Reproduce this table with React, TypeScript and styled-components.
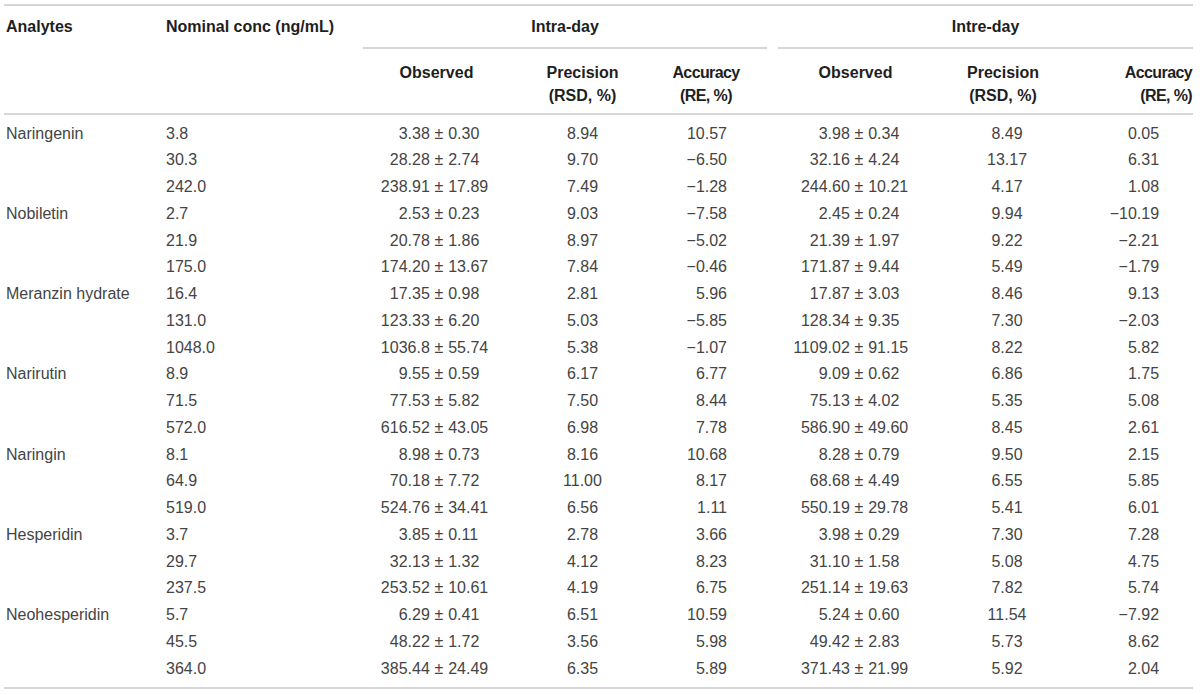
import React from 'react';
import styled, { createGlobalStyle } from 'styled-components';

const GlobalStyle = createGlobalStyle`
  html, body {
    margin: 0;
    padding: 0;
    background: #ffffff;
  }
  body {
    font-family: "Liberation Sans", Arial, sans-serif;
  }
`;

const Page = styled.div`
  width: 1200px;
  height: 695px;
  padding: 4px 0 0 4px;
  box-sizing: border-box;
  overflow: hidden;
`;

const Table = styled.table`
  width: 1189px;
  table-layout: fixed;
  border-collapse: collapse;
  border-top: 2px solid #d6d6d6;
  font-size: 16px;
`;

const HeadCell = styled.th<{ $align?: string; $padLeft?: number }>`
  font-weight: 700;
  color: #1e1e1e;
  line-height: 20px;
  vertical-align: top;
  text-align: ${p => p.$align || 'center'};
  padding: 11px 0 0 ${p => p.$padLeft || 0}px;
`;

const GroupLabel = styled.div<{ $gap: number }>`
  margin-right: ${p => p.$gap}px;
  padding: 0 0 10px;
  border-bottom: 2px solid #d6d6d6;
`;

const SubHeadRow = styled.tr`
  border-bottom: 2px solid #d6d6d6;
`;

const SubHead = styled.th<{ $align?: string; $padLeft?: number; $padRight?: number; $tight?: boolean }>`
  font-weight: 700;
  color: #1e1e1e;
  line-height: 23px;
  text-align: ${p => p.$align || 'center'};
  vertical-align: top;
  letter-spacing: ${p => (p.$tight ? '-0.6px' : 'normal')};
  padding: 11.5px ${p => p.$padRight || 0}px 6.5px ${p => p.$padLeft || 0}px;
`;

const BodyRow = styled.tr`
  &:first-child td {
    padding-top: 5.6px;
  }
  &:last-child td {
    padding-bottom: 5px;
  }
  &:last-child {
    border-bottom: 2px solid #d6d6d6;
  }
`;

const Cell = styled.td<{ $align?: string; $padLeft?: number; $padRight?: number }>`
  color: #444444;
  line-height: 26.75px;
  height: 26.75px;
  white-space: nowrap;
  text-align: ${p => p.$align || 'left'};
  padding: 0 ${p => p.$padRight || 0}px 0 ${p => p.$padLeft || 0}px;
`;

const Observed = styled.div<{ $pm: number }>`
  display: grid;
  grid-template-columns: ${p => p.$pm - 4.7}px 9.4px 1fr;
`;

const Mean = styled.span`
  text-align: right;
  padding-right: 4.5px;
`;

const PlusMinus = styled.span`
  text-align: center;
`;

const Spread = styled.span`
  padding-left: 4.5px;
`;

type Row = {
  analyte?: string;
  nominal: string;
  intra: [string, string, string, string];
  inter: [string, string, string, string];
};

const rows: Row[] = [
  { analyte: 'Naringenin', nominal: '3.8', intra: ['3.38', '0.30', '8.94', '10.57'], inter: ['3.98', '0.34', '8.49', '0.05'] },
  { nominal: '30.3', intra: ['28.28', '2.74', '9.70', '−6.50'], inter: ['32.16', '4.24', '13.17', '6.31'] },
  { nominal: '242.0', intra: ['238.91', '17.89', '7.49', '−1.28'], inter: ['244.60', '10.21', '4.17', '1.08'] },
  { analyte: 'Nobiletin', nominal: '2.7', intra: ['2.53', '0.23', '9.03', '−7.58'], inter: ['2.45', '0.24', '9.94', '−10.19'] },
  { nominal: '21.9', intra: ['20.78', '1.86', '8.97', '−5.02'], inter: ['21.39', '1.97', '9.22', '−2.21'] },
  { nominal: '175.0', intra: ['174.20', '13.67', '7.84', '−0.46'], inter: ['171.87', '9.44', '5.49', '−1.79'] },
  { analyte: 'Meranzin hydrate', nominal: '16.4', intra: ['17.35', '0.98', '2.81', '5.96'], inter: ['17.87', '3.03', '8.46', '9.13'] },
  { nominal: '131.0', intra: ['123.33', '6.20', '5.03', '−5.85'], inter: ['128.34', '9.35', '7.30', '−2.03'] },
  { nominal: '1048.0', intra: ['1036.8', '55.74', '5.38', '−1.07'], inter: ['1109.02', '91.15', '8.22', '5.82'] },
  { analyte: 'Narirutin', nominal: '8.9', intra: ['9.55', '0.59', '6.17', '6.77'], inter: ['9.09', '0.62', '6.86', '1.75'] },
  { nominal: '71.5', intra: ['77.53', '5.82', '7.50', '8.44'], inter: ['75.13', '4.02', '5.35', '5.08'] },
  { nominal: '572.0', intra: ['616.52', '43.05', '6.98', '7.78'], inter: ['586.90', '49.60', '8.45', '2.61'] },
  { analyte: 'Naringin', nominal: '8.1', intra: ['8.98', '0.73', '8.16', '10.68'], inter: ['8.28', '0.79', '9.50', '2.15'] },
  { nominal: '64.9', intra: ['70.18', '7.72', '11.00', '8.17'], inter: ['68.68', '4.49', '6.55', '5.85'] },
  { nominal: '519.0', intra: ['524.76', '34.41', '6.56', '1.11'], inter: ['550.19', '29.78', '5.41', '6.01'] },
  { analyte: 'Hesperidin', nominal: '3.7', intra: ['3.85', '0.11', '2.78', '3.66'], inter: ['3.98', '0.29', '7.30', '7.28'] },
  { nominal: '29.7', intra: ['32.13', '1.32', '4.12', '8.23'], inter: ['31.10', '1.58', '5.08', '4.75'] },
  { nominal: '237.5', intra: ['253.52', '10.61', '4.19', '6.75'], inter: ['251.14', '19.63', '7.82', '5.74'] },
  { analyte: 'Neohesperidin', nominal: '5.7', intra: ['6.29', '0.41', '6.51', '10.59'], inter: ['5.24', '0.60', '11.54', '−7.92'] },
  { nominal: '45.5', intra: ['48.22', '1.72', '3.56', '5.98'], inter: ['49.42', '2.83', '5.73', '8.62'] },
  { nominal: '364.0', intra: ['385.44', '24.49', '6.35', '5.89'], inter: ['371.43', '21.99', '5.92', '2.04'] },
];

const ObservedValue: React.FC<{ mean: string; sd: string; pm: number }> = ({ mean, sd, pm }) => (
  <Observed $pm={pm}>
    <Mean>{mean}</Mean>
    <PlusMinus>±</PlusMinus>
    <Spread>{sd}</Spread>
  </Observed>
);

export default function App() {
  return (
    <Page>
      <GlobalStyle />
      <Table>
        <colgroup>
          <col style={{ width: 158 }} />
          <col style={{ width: 201 }} />
          <col style={{ width: 147 }} />
          <col style={{ width: 145 }} />
          <col style={{ width: 123 }} />
          <col style={{ width: 155 }} />
          <col style={{ width: 144 }} />
          <col style={{ width: 116 }} />
        </colgroup>
        <thead>
          <tr>
            <HeadCell rowSpan={2} $align="left" $padLeft={2}>Analytes</HeadCell>
            <HeadCell rowSpan={2} $align="left" $padLeft={4}>Nominal conc (ng/mL)</HeadCell>
            <HeadCell colSpan={3}>
              <GroupLabel $gap={11}>Intra-day</GroupLabel>
            </HeadCell>
            <HeadCell colSpan={3}>
              <GroupLabel $gap={0}>Intre-day</GroupLabel>
            </HeadCell>
          </tr>
          <SubHeadRow>
            <SubHead>Observed</SubHead>
            <SubHead>Precision<br />(RSD, %)</SubHead>
            <SubHead $padRight={21} $tight>Accuracy<br />(RE, %)</SubHead>
            <SubHead>Observed</SubHead>
            <SubHead $padRight={4}>Precision<br />(RSD, %)</SubHead>
            <SubHead $align="right" $padRight={1} $tight>Accuracy<br />(RE, %)</SubHead>
          </SubHeadRow>
        </thead>
        <tbody>
          {rows.map((r, i) => (
            <BodyRow key={i}>
              <Cell $padLeft={2}>{r.analyte || ''}</Cell>
              <Cell $padLeft={4}>{r.nominal}</Cell>
              <Cell>
                <ObservedValue mean={r.intra[0]} sd={r.intra[1]} pm={76} />
              </Cell>
              <Cell $align="center">{r.intra[2]}</Cell>
              <Cell $align="right" $padRight={51}>{r.intra[3]}</Cell>
              <Cell>
                <ObservedValue mean={r.inter[0]} sd={r.inter[1]} pm={81} />
              </Cell>
              <Cell $align="center" $padLeft={4}>{r.inter[2]}</Cell>
              <Cell $align="right" $padRight={34}>{r.inter[3]}</Cell>
            </BodyRow>
          ))}
        </tbody>
      </Table>
    </Page>
  );
}
